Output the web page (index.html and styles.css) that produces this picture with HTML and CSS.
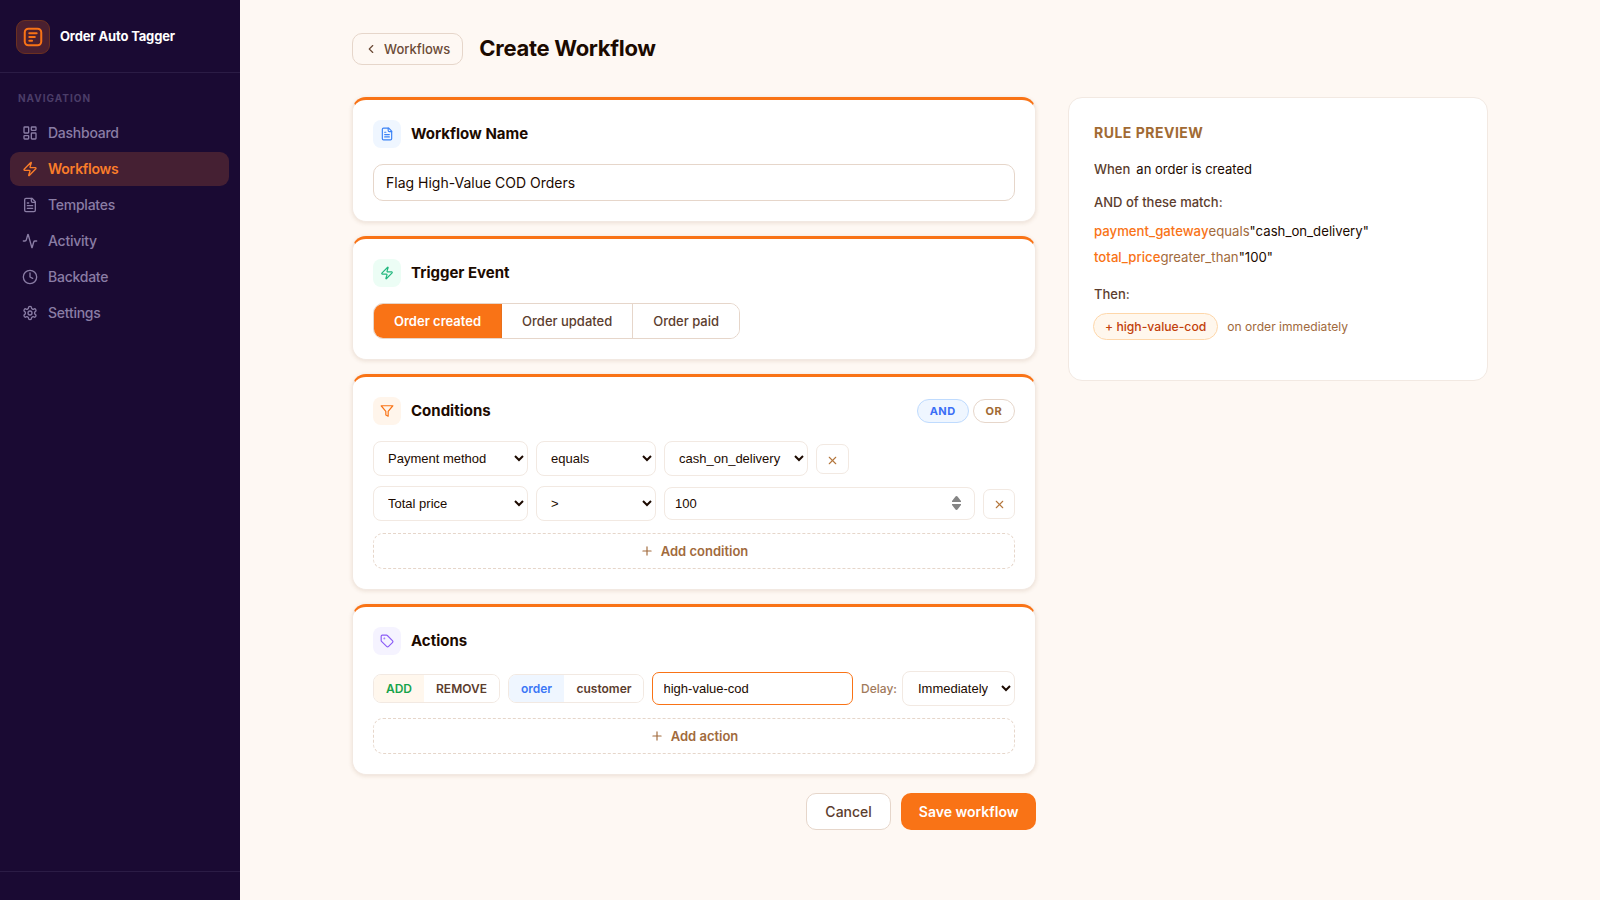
FILE: index.html
```html
<!DOCTYPE html>
<html lang="en">
<head>
<meta charset="utf-8">
<title>Create Workflow</title>
<link rel="stylesheet" href="styles.css">
</head>
<body>
<div class="app">
  <aside class="sidebar">
    <div class="brand">
      <div class="brand-logo">
        <svg width="22" height="22" viewBox="0 0 24 24" fill="none" stroke="currentColor" stroke-width="2.2" stroke-linecap="round" stroke-linejoin="round"><rect x="3" y="3" width="18" height="18" rx="4"/><path d="M8 8h8"/><path d="M8 12h6"/><path d="M8 16h3"/></svg>
      </div>
      <span class="brand-name">Order Auto Tagger</span>
    </div>
    <nav class="nav">
      <div class="nav-label">NAVIGATION</div>
      <a class="nav-item"><svg class="ico" viewBox="0 0 24 24"><rect width="7" height="9" x="3" y="3" rx="1"/><rect width="7" height="5" x="14" y="3" rx="1"/><rect width="7" height="9" x="14" y="12" rx="1"/><rect width="7" height="5" x="3" y="16" rx="1"/></svg>Dashboard</a>
      <a class="nav-item active"><svg class="ico" viewBox="0 0 24 24"><path d="M4 14a1 1 0 0 1-.78-1.63l9.9-10.2a.5.5 0 0 1 .86.46l-1.92 6.02A1 1 0 0 0 13 10h7a1 1 0 0 1 .78 1.63l-9.9 10.2a.5.5 0 0 1-.86-.46l1.92-6.02A1 1 0 0 0 11 14z"/></svg>Workflows</a>
      <a class="nav-item"><svg class="ico" viewBox="0 0 24 24"><path d="M15 2H6a2 2 0 0 0-2 2v16a2 2 0 0 0 2 2h12a2 2 0 0 0 2-2V7Z"/><path d="M14 2v4a2 2 0 0 0 2 2h4"/><path d="M10 9H8"/><path d="M16 13H8"/><path d="M16 17H8"/></svg>Templates</a>
      <a class="nav-item"><svg class="ico" viewBox="0 0 24 24"><path d="M22 12h-2.48a2 2 0 0 0-1.93 1.46l-2.35 8.36a.25.25 0 0 1-.48 0L9.24 2.18a.25.25 0 0 0-.48 0l-2.35 8.36A2 2 0 0 1 4.49 12H2"/></svg>Activity</a>
      <a class="nav-item"><svg class="ico" viewBox="0 0 24 24"><circle cx="12" cy="12" r="10"/><polyline points="12 6 12 12 16 14"/></svg>Backdate</a>
      <a class="nav-item"><svg class="ico" viewBox="0 0 24 24"><path d="M12.22 2h-.44a2 2 0 0 0-2 2v.18a2 2 0 0 1-1 1.73l-.43.25a2 2 0 0 1-2 0l-.15-.08a2 2 0 0 0-2.73.73l-.22.38a2 2 0 0 0 .73 2.73l.15.1a2 2 0 0 1 1 1.72v.51a2 2 0 0 1-1 1.74l-.15.09a2 2 0 0 0-.73 2.73l.22.38a2 2 0 0 0 2.73.73l.15-.08a2 2 0 0 1 2 0l.43.25a2 2 0 0 1 1 1.73V20a2 2 0 0 0 2 2h.44a2 2 0 0 0 2-2v-.18a2 2 0 0 1 1-1.73l.43-.25a2 2 0 0 1 2 0l.15.08a2 2 0 0 0 2.73-.73l.22-.39a2 2 0 0 0-.73-2.73l-.15-.08a2 2 0 0 1-1-1.74v-.5a2 2 0 0 1 1-1.74l.15-.09a2 2 0 0 0 .73-2.73l-.22-.38a2 2 0 0 0-2.73-.73l-.15.08a2 2 0 0 1-2 0l-.43-.25a2 2 0 0 1-1-1.73V4a2 2 0 0 0-2-2z"/><circle cx="12" cy="12" r="3"/></svg>Settings</a>
    </nav>
    <div class="sidebar-foot"></div>
  </aside>

  <main class="main">
    <header class="page-head">
      <a class="back"><svg class="ico-sm" viewBox="0 0 24 24"><path d="m15 18-6-6 6-6"/></svg>Workflows</a>
      <h1 class="title">Create Workflow</h1>
    </header>

    <div class="columns">
      <div class="form">
        <section class="card">
          <div class="card-head">
            <span class="card-icon tone-blue"><svg class="ico-card" viewBox="0 0 24 24"><path d="M15 2H6a2 2 0 0 0-2 2v16a2 2 0 0 0 2 2h12a2 2 0 0 0 2-2V7Z"/><path d="M14 2v4a2 2 0 0 0 2 2h4"/><path d="M10 9H8"/><path d="M16 13H8"/><path d="M16 17H8"/></svg></span>
            <h2 class="card-title">Workflow Name</h2>
          </div>
          <input class="name-input" type="text" value="Flag High-Value COD Orders">
        </section>

        <section class="card">
          <div class="card-head">
            <span class="card-icon tone-green"><svg class="ico-card" viewBox="0 0 24 24"><path d="M4 14a1 1 0 0 1-.78-1.63l9.9-10.2a.5.5 0 0 1 .86.46l-1.92 6.02A1 1 0 0 0 13 10h7a1 1 0 0 1 .78 1.63l-9.9 10.2a.5.5 0 0 1-.86-.46l1.92-6.02A1 1 0 0 0 11 14z"/></svg></span>
            <h2 class="card-title">Trigger Event</h2>
          </div>
          <div class="trigger">
            <button class="trigger-btn on">Order created</button>
            <button class="trigger-btn next">Order updated</button>
            <button class="trigger-btn">Order paid</button>
          </div>
        </section>

        <section class="card">
          <div class="card-head">
            <span class="card-icon tone-orange"><svg class="ico-card" viewBox="0 0 24 24"><polygon points="22 3 2 3 10 12.46 10 19 14 21 14 12.46 22 3"/></svg></span>
            <h2 class="card-title">Conditions</h2>
            <div class="logic">
              <button class="pill pill-on">AND</button>
              <button class="pill">OR</button>
            </div>
          </div>
          <div class="cond-row">
            <select class="field w-field"><option>Payment method</option></select>
            <select class="field w-op"><option>equals</option></select>
            <select class="field w-val"><option>cash_on_delivery</option></select>
            <button class="del del-wide"><svg class="ico-x" viewBox="0 0 24 24"><path d="M18 6 6 18"/><path d="m6 6 12 12"/></svg></button>
          </div>
          <div class="cond-row">
            <select class="field w-field"><option>Total price</option></select>
            <select class="field w-op"><option>&gt;</option></select>
            <input class="field num" type="number" value="100">
            <button class="del"><svg class="ico-x" viewBox="0 0 24 24"><path d="M18 6 6 18"/><path d="m6 6 12 12"/></svg></button>
          </div>
          <button class="add-btn"><svg class="ico-sm" viewBox="0 0 24 24"><path d="M5 12h14"/><path d="M12 5v14"/></svg>Add condition</button>
        </section>

        <section class="card">
          <div class="card-head">
            <span class="card-icon tone-purple"><svg class="ico-card" viewBox="0 0 24 24"><path d="M12.586 2.586A2 2 0 0 0 11.172 2H4a2 2 0 0 0-2 2v7.172a2 2 0 0 0 .586 1.414l8.704 8.704a2.426 2.426 0 0 0 3.42 0l6.58-6.58a2.426 2.426 0 0 0 0-3.42z"/><circle cx="7.5" cy="7.5" r=".5"/></svg></span>
            <h2 class="card-title">Actions</h2>
          </div>
          <div class="action-row">
            <div class="seg">
              <button class="seg-btn seg-add">ADD</button>
              <button class="seg-btn seg-remove">REMOVE</button>
            </div>
            <div class="seg">
              <button class="seg-btn seg-order">order</button>
              <button class="seg-btn seg-customer">customer</button>
            </div>
            <input class="tag-input" type="text" value="high-value-cod">
            <div class="delay-group">
              <span class="delay">Delay:</span>
              <select class="field w-delay"><option>Immediately</option></select>
            </div>
          </div>
          <button class="add-btn"><svg class="ico-sm" viewBox="0 0 24 24"><path d="M5 12h14"/><path d="M12 5v14"/></svg>Add action</button>
        </section>

        <div class="footer-actions">
          <button class="btn-cancel">Cancel</button>
          <button class="btn-save">Save workflow</button>
        </div>
      </div>

      <aside class="preview">
        <h3 class="preview-title">RULE PREVIEW</h3>
        <p class="when"><span class="when-key">When</span><span class="when-val">an order is created</span></p>
        <p class="match">AND of these match:</p>
        <p class="rule"><span class="r-field">payment_gateway</span><span class="r-op">equals</span><span class="r-val">"cash_on_delivery"</span></p>
        <p class="rule"><span class="r-field">total_price</span><span class="r-op">greater_than</span><span class="r-val">"100"</span></p>
        <p class="then">Then:</p>
        <div class="result">
          <span class="chip">+ high-value-cod</span>
          <span class="result-note">on order immediately</span>
        </div>
      </aside>
    </div>
  </main>
</div>
</body>
</html>
```

FILE: styles.css
```css
* { box-sizing: border-box; }
html, body { margin: 0; height: 100%; }
body {
  font-family: Inter, "Liberation Sans", sans-serif;
  background: #fef8f3;
  color: #1c0a00;
  overflow: hidden;
}
.app { display: flex; height: 900px; }

/* Sidebar */
.sidebar {
  width: 240px;
  flex: none;
  background: #1a0a33;
  display: flex;
  flex-direction: column;
}
.brand {
  height: 73px;
  display: flex;
  align-items: center;
  gap: 10px;
  padding: 1px 16px 0;
  border-bottom: 1px solid #2b1c45;
}
.brand-logo {
  width: 34px;
  height: 34px;
  border-radius: 9px;
  background: #4a2030;
  border: 1px solid #6b3020;
  color: #f97316;
  display: flex;
  align-items: center;
  justify-content: center;
}
.brand-name { color: #fff; font-size: 13px; font-weight: 700; letter-spacing: -0.15px; padding-bottom: 2px; }
.nav { flex: 1; padding: 19px 11px 0 10px; display: flex; flex-direction: column; gap: 2px; }
.nav-label {
  font-size: 10px;
  font-weight: 700;
  letter-spacing: 1px;
  color: #4b3d68;
  padding: 0 8px;
  margin-bottom: 10px;
  line-height: 12px;
}
.nav-item {
  height: 34px;
  display: flex;
  align-items: center;
  gap: 10px;
  padding: 0 12px 1px;
  border-radius: 9px;
  font-size: 14px;
  font-weight: 500;
  letter-spacing: -0.25px;
  color: #8a7da5;
}
.nav-item.active { background: #452033; color: #fb7d2a; font-weight: 600; }
.sidebar-foot { height: 29px; border-top: 1px solid #2b1c45; }

.ico, .ico-sm, .ico-x, .ico-card {
  fill: none;
  stroke: currentColor;
  stroke-width: 2;
  stroke-linecap: round;
  stroke-linejoin: round;
  flex: none;
}
.ico { width: 16px; height: 16px; }
.ico-card { width: 14px; height: 14px; }
.ico-sm { width: 14px; height: 14px; }
.ico-x { width: 13px; height: 13px; margin-top: 2px; }

/* Main */
.main { flex: 1; padding: 33px 112px 0; min-width: 0; }
.page-head { display: flex; align-items: center; gap: 16px; margin-bottom: 32px; }
.back {
  height: 32px;
  display: flex;
  align-items: center;
  gap: 6px;
  padding: 0 12px 0 11px;
  border: 1px solid #e6d6ca;
  border-radius: 10px;
  font-size: 13px;
  font-weight: 500;
  color: #6b4a36;
}
.title { margin: 0; padding-bottom: 2px; font-size: 22px; font-weight: 700; letter-spacing: -0.3px; color: #1c0a00; }

.columns { display: flex; align-items: flex-start; gap: 32px; }
.form { width: 684px; flex: none; display: flex; flex-direction: column; gap: 14px; }

.card {
  background: #fff;
  border: 1px solid #f2e9e2;
  border-top: 3px solid #f97316;
  border-radius: 14px;
  padding: 20px;
  box-shadow: 0 1px 4px rgba(120, 70, 30, 0.14);
}
.card-head { display: flex; align-items: center; gap: 10px; margin-bottom: 16px; }
.card-icon {
  width: 28px;
  height: 28px;
  border-radius: 8px;
  display: flex;
  align-items: center;
  justify-content: center;
}
.tone-blue { background: #eff6ff; color: #3b82f6; }
.tone-green { background: #ecfdf5; color: #22b77e; }
.tone-orange { background: #fff5eb; color: #f97316; }
.tone-purple { background: #f5f3ff; color: #8b5cf6; }
.card-title { margin: 0; padding-bottom: 2px; font-size: 15px; font-weight: 700; color: #1c0a00; }

.name-input {
  display: block;
  width: 100%;
  height: 37px;
  padding: 0 12px;
  border: 1px solid #e6d6ca;
  border-radius: 10px;
  font: 400 14px Inter, sans-serif;
  color: #1c0a00;
  background: #fff;
  outline: none;
}

.trigger {
  display: inline-flex;
  height: 36px;
  border: 1px solid #e6d6ca;
  border-radius: 10px;
  overflow: hidden;
  vertical-align: top;
}
.trigger-btn {
  padding: 0 20px;
  border: 0;
  border-right: 1px solid #e6d6ca;
  background: #fff;
  font: 500 13px Inter, sans-serif;
  color: #5c3d2e;
}
.trigger-btn:last-child { border-right: 0; }
.trigger-btn.on { background: #f97316; color: #fff; font-weight: 600; padding-right: 20px; border-right-color: #e8701c; }
.trigger-btn.next { padding-left: 20px; }

.logic { margin-left: auto; display: flex; gap: 4px; }
.pill {
  height: 24px;
  padding: 0 12px;
  border: 1px solid #e6d6ca;
  border-radius: 12px;
  background: #fff;
  font: 700 11px Inter, sans-serif;
  letter-spacing: 0.4px;
  color: #a16a33;
}
.pill-on { background: #eff6ff; border-color: #bfdbfe; color: #3b6ff6; }

.cond-row { display: flex; align-items: center; gap: 8px; margin-bottom: 10px; }
.cond-row + .cond-row { margin-bottom: 12px; }
.field {
  height: 35px;
  padding: 0 10px;
  border: 1px solid #f2e9e2;
  border-radius: 8px;
  background: #fff;
  color: #1c0a00;
  font: 400 13px "Liberation Sans", sans-serif;
  outline: none;
}
.w-field { width: 155px; }
.w-op { width: 120px; }
.w-val { width: 144px; }
.num { flex: 1; min-width: 0; height: 33px; }
.num::-webkit-inner-spin-button {
  -webkit-appearance: none;
  appearance: none;
  opacity: 1;
  width: 9px;
  height: 14px;
  margin-right: 3px;
  background: url("data:image/svg+xml,%3Csvg xmlns='http://www.w3.org/2000/svg' width='9' height='14' viewBox='0 0 9 14'%3E%3Cpath fill='%23858585' d='M4.5 0 C5 0 5.4.3 5.7.7 L9 5 V6 H0 V5 L3.3.7 C3.6.3 4 0 4.5 0Z M0 8 H9 V9 L5.7 13.3 C5.4 13.7 5 14 4.5 14 C4 14 3.6 13.7 3.3 13.3 L0 9Z'/%3E%3C/svg%3E") no-repeat center;
}
.w-delay { width: 113px; flex: none; padding-left: 11px; }
.del {
  width: 32px;
  height: 30px;
  padding: 0;
  border: 1px solid #f2e9e2;
  border-radius: 7px;
  background: #fff;
  color: #b4763c;
  display: flex;
  align-items: center;
  justify-content: center;
}
.del-wide { width: 33px; }
.del-wide .ico-x { margin-top: 3px; }
.add-btn {
  width: 100%;
  height: 36px;
  display: flex;
  align-items: center;
  justify-content: center;
  gap: 7px;
  border: 1px dashed #e6d6ca;
  border-radius: 10px;
  background: #fff;
  font: 600 13px Inter, sans-serif;
  color: #a16a3c;
}

.action-row { display: flex; align-items: center; gap: 8px; margin-bottom: 12px; }
.seg {
  display: flex;
  height: 29px;
  border: 1px solid #f2e9e2;
  border-radius: 8px;
  overflow: hidden;
  flex: none;
}
.seg-btn { border: 0; background: #fff; font: 600 12px Inter, sans-serif; padding: 0; color: #5c3d2e; }
.seg-add { width: 50px; background: #fff7ed; color: #16a34a; }
.seg-remove { width: 75px; }
.seg-order { width: 55px; background: #eff6ff; color: #3b76f6; }
.seg-customer { width: 79px; padding-left: 1px; }
.tag-input {
  width: 201px;
  flex: none;
  height: 33px;
  padding: 0 10.5px;
  border: 1px solid #f97316;
  border-radius: 7px;
  font: 400 13px "Liberation Sans", sans-serif;
  color: #1c0a00;
  outline: none;
}
.delay-group { margin-left: auto; display: flex; align-items: center; gap: 5px; }
.delay { font-size: 12px; font-weight: 500; color: #a17a5c; }

.footer-actions { display: flex; justify-content: flex-end; gap: 10px; margin-top: 4px; }
.btn-cancel {
  height: 37px;
  padding: 0 18.5px;
  border: 1px solid #e6d6ca;
  border-radius: 10px;
  background: #fff;
  font: 500 14px Inter, sans-serif;
  color: #5c3d2e;
}
.btn-save {
  height: 37px;
  padding: 0 17.5px;
  border: 0;
  border-radius: 10px;
  background: #f97316;
  font: 600 14px Inter, sans-serif;
  color: #fff;
}

/* Preview */
.preview {
  width: 420px;
  flex: none;
  height: 284px;
  background: #fff;
  border: 1px solid #f2e9e2;
  border-radius: 14px;
  padding: 27px 25px;
}
.preview-title { margin: 0 0 20px; font-size: 14px; font-weight: 700; letter-spacing: 0.5px; line-height: 16px; color: #a16a33; }
.when, .match, .rule, .then { margin: 0; font-size: 13px; line-height: 16px; }
.when { display: flex; gap: 6px; color: #1c0a00; margin-bottom: 17px; }
.when-key { color: #5c3d2e; font-weight: 500; }
.match { font-weight: 500; color: #5c3d2e; margin-bottom: 13px; }
.rule { margin-bottom: 10px; font-size: 13.2px; }
.r-field { color: #f97316; font-weight: 500; }
.r-op { color: #a16a3c; }
.r-val { color: #1c0a00; }
.then { font-weight: 500; color: #5c3d2e; margin: 21px 0 11px; }
.result { display: flex; align-items: center; gap: 9px; margin-left: -1px; }
.chip {
  height: 27px;
  display: flex;
  align-items: center;
  padding: 0 11px;
  border: 1px solid #fed7aa;
  border-radius: 14px;
  background: #fff7ed;
  font-size: 12.2px;
  font-weight: 500;
  color: #c2410c;
}
.result-note { font-size: 12.1px; color: #a16a3c; }
```
